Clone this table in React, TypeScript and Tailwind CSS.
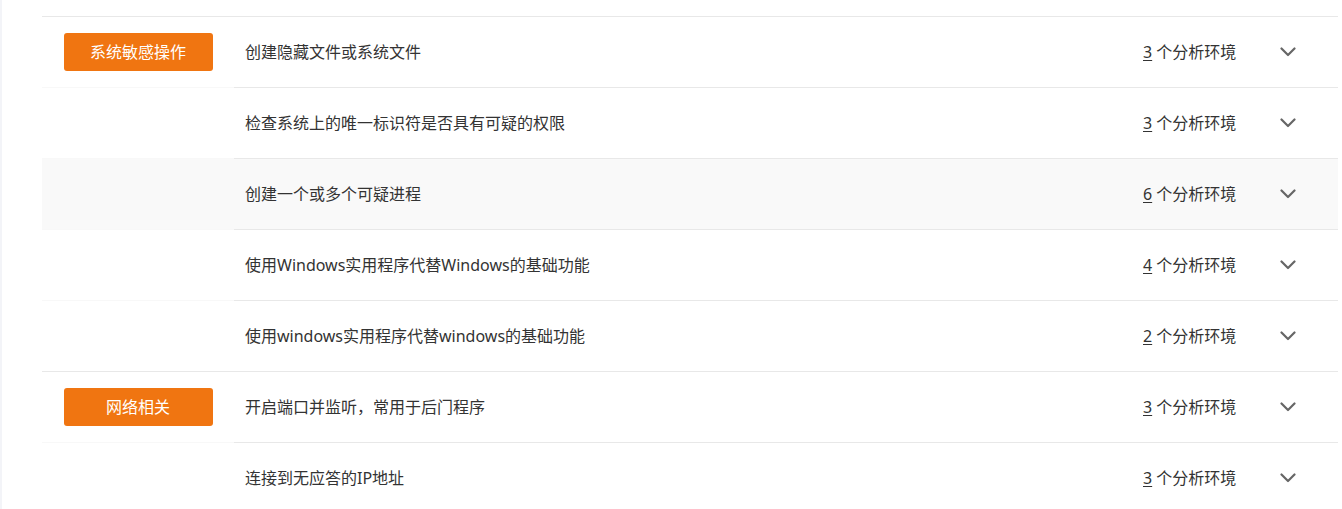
import React from "react";

type Row = { cat?: string; title: string; count: number; hover?: boolean; groupEnd?: boolean };

const rows: Row[] = [
  { cat: "系统敏感操作", title: "创建隐藏文件或系统文件", count: 3 },
  { title: "检查系统上的唯一标识符是否具有可疑的权限", count: 3 },
  { title: "创建一个或多个可疑进程", count: 6, hover: true },
  { title: "使用Windows实用程序代替Windows的基础功能", count: 4 },
  { title: "使用windows实用程序代替windows的基础功能", count: 2, groupEnd: true },
  { cat: "网络相关", title: "开启端口并监听，常用于后门程序", count: 3 },
  { title: "连接到无应答的IP地址", count: 3 },
];

function Chevron() {
  return (
    <svg width="16" height="10" viewBox="0 0 16 10" fill="none">
      <path d="M1.5 1.5 L8 8 L14.5 1.5" stroke="#666666" strokeWidth="2.2" strokeLinecap="round" strokeLinejoin="round" />
    </svg>
  );
}

export default function App() {
  return (
    <div
      className="flex min-h-[509px] w-[1342px] bg-white text-[16px] text-[#333333]"
      style={{ fontFamily: '"Noto Sans", "Noto Sans CJK SC", sans-serif' }}
    >
      <div className="w-[2px] shrink-0 bg-[#f3f4f8]" />
      <div className="flex-1 pl-[40px] pr-[4px] pt-[16px]">
        <div className="border-t border-[#e8e8e8]">
          {rows.map((r, i) => (
            <div key={i} className={`flex h-[71px] ${r.hover ? "bg-[#f9f9f9]" : ""}`}>
              <div
                className={`flex w-[192px] shrink-0 items-center justify-center border-b ${
                  r.groupEnd ? "border-[#e8e8e8]" : "border-[#f8f8f8]"
                }`}
              >
                {r.cat && (
                  <div className="flex h-[38px] w-[149px] items-center justify-center rounded-[3px] bg-[#f07511] text-white">
                    {r.cat}
                  </div>
                )}
              </div>
              <div className={`flex flex-1 items-center border-b ${i === rows.length - 1 ? "border-transparent" : "border-[#e8e8e8]"}`}>
                <div className="flex-1 pl-[11px]">{r.title}</div>
                <div className="w-[95px] whitespace-nowrap">
                  <span className="underline underline-offset-2">{r.count}</span> 个分析环境
                </div>
                <div className="flex w-[100px] items-center justify-center">
                  <Chevron />
                </div>
              </div>
            </div>
          ))}
        </div>
      </div>
    </div>
  );
}
